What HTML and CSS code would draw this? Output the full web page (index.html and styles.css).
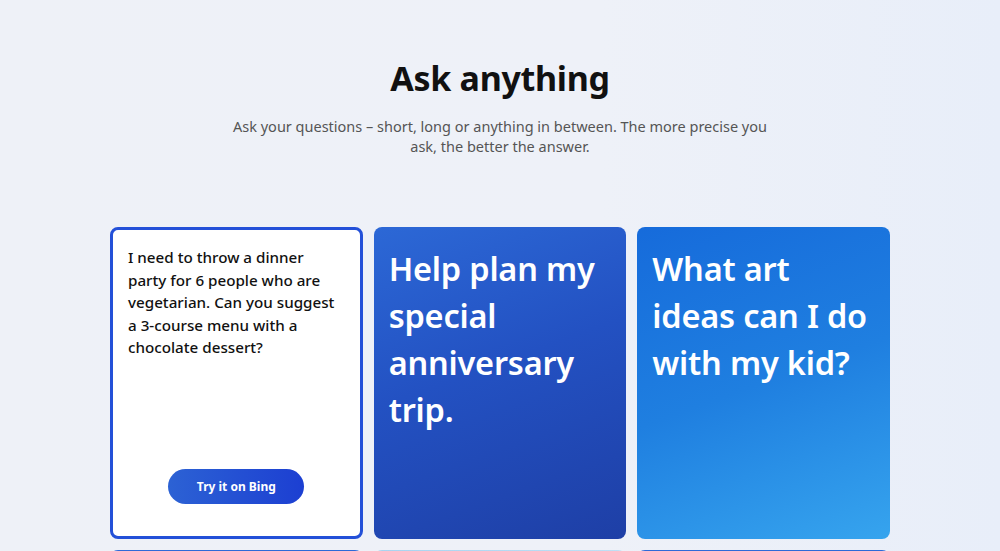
FILE: index.html
```html
<!DOCTYPE HTML>
<html>
	<head>
		<title>Ask anything</title>
		<meta charset="utf-8">
		<link rel="stylesheet" href="styles.css">
	</head>
	<body>
		<div class="page">
			<div class="head">
				<h1>Ask anything</h1>
				<p>Ask your questions – short, long or anything in between. The more precise you ask, the better the answer.</p>
			</div>

			<div class="grid">
				<div class="card card-white">
					<p class="small">I need to throw a dinner party for 6 people who are vegetarian. Can you suggest a 3-course menu with a chocolate dessert?</p>
					<a class="btn" href="#">Try it on Bing</a>
				</div>
				<div class="card card-dark">
					<p class="big">Help plan my special anniversary trip.</p>
				</div>
				<div class="card card-sky">
					<p class="big">What art ideas can I do with my kid?</p>
				</div>

				<div class="card card-mid"></div>
				<div class="card card-light"></div>
				<div class="card card-mid"></div>
			</div>
		</div>
	</body>
</html>
```

FILE: styles.css
```css
*{ margin:0; padding:0; box-sizing:border-box;}
body{
	background:linear-gradient(90deg,#eef1f7 0%,#eef1f8 60%,#e8eef9 100%);
	font-family:"Noto Sans","Open Sans",sans-serif;
	color:#111;
	overflow:hidden;
}
.page{
	width:780px;
	margin:0 auto;
	padding-top:55px;
}
.head{
	text-align:center;
}
.head h1{
	font-size:34px;
	line-height:46px;
	font-weight:700;
	color:#111;
	letter-spacing:-0.3px;
}
.head p{
	width:548px;
	margin:16px auto 0;
	font-size:14.5px;
	line-height:19.5px;
	color:#555;
}
.grid{
	display:grid;
	grid-template-columns:repeat(3,1fr);
	gap:11px 11px;
	margin-top:71px;
}
.card{
	height:312px;
	border-radius:8px;
	padding:18px 15px;
	display:flex;
	flex-direction:column;
	color:#fff;
}
.card-white{
	background:#fff;
	border:3px solid #2350d8;
	padding:16px 15px 32px;
	color:#111;
}
.card-dark{
	background:linear-gradient(160deg,#2c68d6 0%,#2351c2 45%,#1e3fa6 100%);
}
.card-sky{
	background:linear-gradient(160deg,#166bdb 0%,#1f7fe0 50%,#36a4ee 100%);
}
.card-mid{
	background:linear-gradient(90deg,#2f6ad8,#2b6ad8);
}
.card-light{
	background:linear-gradient(90deg,#a8d4f0,#bfe0f5);
}
.small{
	font-size:15.2px;
	line-height:22.5px;
	font-weight:500;
}
.big{
	font-size:32.5px;
	line-height:47px;
	font-weight:600;
	letter-spacing:-0.2px;
}
.btn{
	margin:auto auto 0;
	width:136px;
	height:35px;
	border-radius:18px;
	background:linear-gradient(90deg,#2c62d4,#1c3fd2);
	color:#fff;
	font-size:12px;
	font-weight:700;
	text-decoration:none;
	display:flex;
	align-items:center;
	justify-content:center;
}
```
